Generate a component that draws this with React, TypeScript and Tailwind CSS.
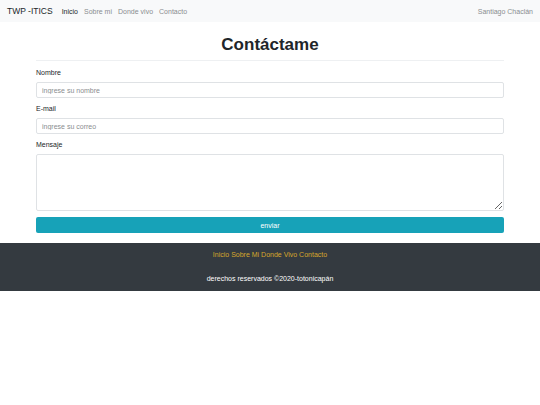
export default function App() {
  return (
    <div className="min-h-[405px] bg-white text-[#212529]" style={{ fontFamily: '"Liberation Sans", Arial, sans-serif' }}>
      <nav className="flex h-[22px] items-center bg-[#f8f9fa] pl-[7px] pr-[7px]">
        <span className="text-[8.5px] leading-none text-[#212529]">TWP -ITICS</span>
        <div className="ml-[9px] flex items-center gap-[6px] text-[7px] leading-none">
          <span className="text-[#212529]">Inicio</span>
          <span className="text-[#8a8d90]">Sobre mi</span>
          <span className="text-[#8a8d90]">Donde vivo</span>
          <span className="text-[#8a8d90]">Contacto</span>
        </div>
        <span className="ml-auto text-[7px] leading-none text-[#8a8d90]">Santiago Chaclán</span>
      </nav>

      <main className="mx-[36px] pt-[12px]">
        <h1 className="text-center text-[17px] font-bold leading-[22px] text-[#212529]">Contáctame</h1>
        <hr className="mt-[4px] border-t border-[#eef0f2]" />

        <form className="pt-[7px]">
          <label className="block text-[7px] leading-[10px]">Nombre</label>
          <input
            className="mt-[4px] block h-[16px] w-full rounded-[2px] border border-[#dfe2e5] px-[5px] text-[7px] outline-none placeholder:text-[#8a8d90]"
            placeholder="ingrese su nombre"
          />
          <label className="mt-[6px] block text-[7px] leading-[10px]">E-mail</label>
          <input
            className="mt-[4px] block h-[16px] w-full rounded-[2px] border border-[#dfe2e5] px-[5px] text-[7px] outline-none placeholder:text-[#8a8d90]"
            placeholder="ingrese su correo"
          />
          <label className="mt-[6px] block text-[7px] leading-[10px]">Mensaje</label>
          <textarea className="mt-[4px] block h-[57px] w-full rounded-[2px] border border-[#dfe2e5] outline-none" />
          <button
            type="button"
            className="mt-[6px] block h-[16px] w-full rounded-[2px] bg-[#17a2b8] text-[7px] leading-none text-white"
          >
            enviar
          </button>
        </form>
      </main>

      <footer className="mt-[10px] flex h-[48px] flex-col items-center bg-[#343a40] pt-[8px] text-[7px] leading-none">
        <span className="text-[#d6a72c]">Inicio Sobre Mi Donde Vivo Contacto</span>
        <span className="mt-[17px] text-white">derechos reservados ©2020-totonicapán</span>
      </footer>
    </div>
  );
}
